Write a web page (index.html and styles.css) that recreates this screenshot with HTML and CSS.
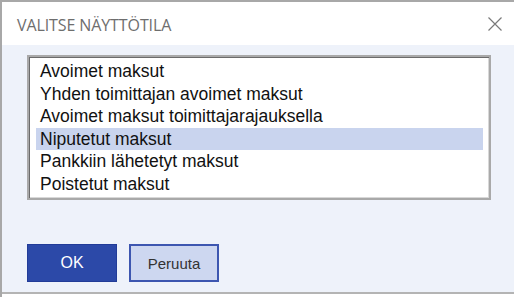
FILE: index.html
```html
<!DOCTYPE html>
<html lang="fi">
<head>
<meta charset="utf-8">
<link rel="stylesheet" href="styles.css">
</head>
<body>
<div class="dialog">
  <div class="titlebar">
    <span class="title">VALITSE NÄYTTÖTILA</span>
    <svg class="close" width="16" height="16" viewBox="0 0 16 16"><path d="M1.5 1.5 L14.5 14.5 M14.5 1.5 L1.5 14.5" stroke="#7a7a7a" stroke-width="1.2" fill="none"/></svg>
  </div>
  <div class="content">
    <ul class="list">
      <li>Avoimet maksut</li>
      <li>Yhden toimittajan avoimet maksut</li>
      <li>Avoimet maksut toimittajarajauksella</li>
      <li class="selected">Niputetut maksut</li>
      <li>Pankkiin lähetetyt maksut</li>
      <li>Poistetut maksut</li>
    </ul>
    <div class="buttons">
      <button class="btn primary">OK</button>
      <button class="btn secondary">Peruuta</button>
    </div>
  </div>
</div>
</body>
</html>
```

FILE: styles.css
```css
html, body {
  margin: 0;
  padding: 0;
  background: #ffffff;
}
.dialog {
  width: 514px;
  height: 297px;
  box-sizing: border-box;
  border-top: 2px solid #a8a8a8;
  border-left: 2px solid #a8a8a8;
  display: flex;
  flex-direction: column;
  background: #ffffff;
}
.titlebar {
  height: 43px;
  flex: none;
  display: flex;
  align-items: center;
  justify-content: space-between;
  padding: 0 11px 0 15px;
  box-sizing: border-box;
  background: #ffffff;
}
.title {
  font-family: "Open Sans", "Noto Sans", sans-serif;
  font-size: 16px;
  color: #6e6e6e;
  letter-spacing: -0.1px;
  margin-top: 2px;
}
.close {
  margin-top: 0;
}
.content {
  flex: none;
  height: 249px;
  box-sizing: border-box;
  background: #eef2fa;
  border-bottom: 2px solid #b4b4b4;
  padding: 10px 0 0 25px;
}
.list {
  list-style: none;
  margin: 0;
  width: 464px;
  height: 145px;
  box-sizing: border-box;
  background: #ffffff;
  border: 2px solid #a9a9a9;
  box-shadow: inset 1px 1px 0 #6b6b6b, inset -1px -1px 0 #d8d8d8;
  padding: 3px 6px 0 7px;
}
.list li {
  height: 22.5px;
  line-height: 22.5px;
  padding-left: 4px;
  font-family: "Liberation Sans", Arial, sans-serif;
  font-size: 17.5px;
  color: #111111;
}
.list li.selected {
  background: #c9d4ee;
}
.buttons {
  display: flex;
  gap: 12px;
  margin-top: 44px;
}
.btn {
  width: 90px;
  height: 38px;
  box-sizing: border-box;
  font-family: "Liberation Sans", Arial, sans-serif;
  font-size: 15px;
  padding: 0;
  margin: 0;
  cursor: pointer;
}
.btn.primary {
  background: #2c49a8;
  border: 1px solid #223c98;
  color: #ffffff;
  font-size: 16px;
}
.btn.secondary {
  background: #cdd7f0;
  border: 2px solid #3d56b0;
  color: #333333;
}
```
